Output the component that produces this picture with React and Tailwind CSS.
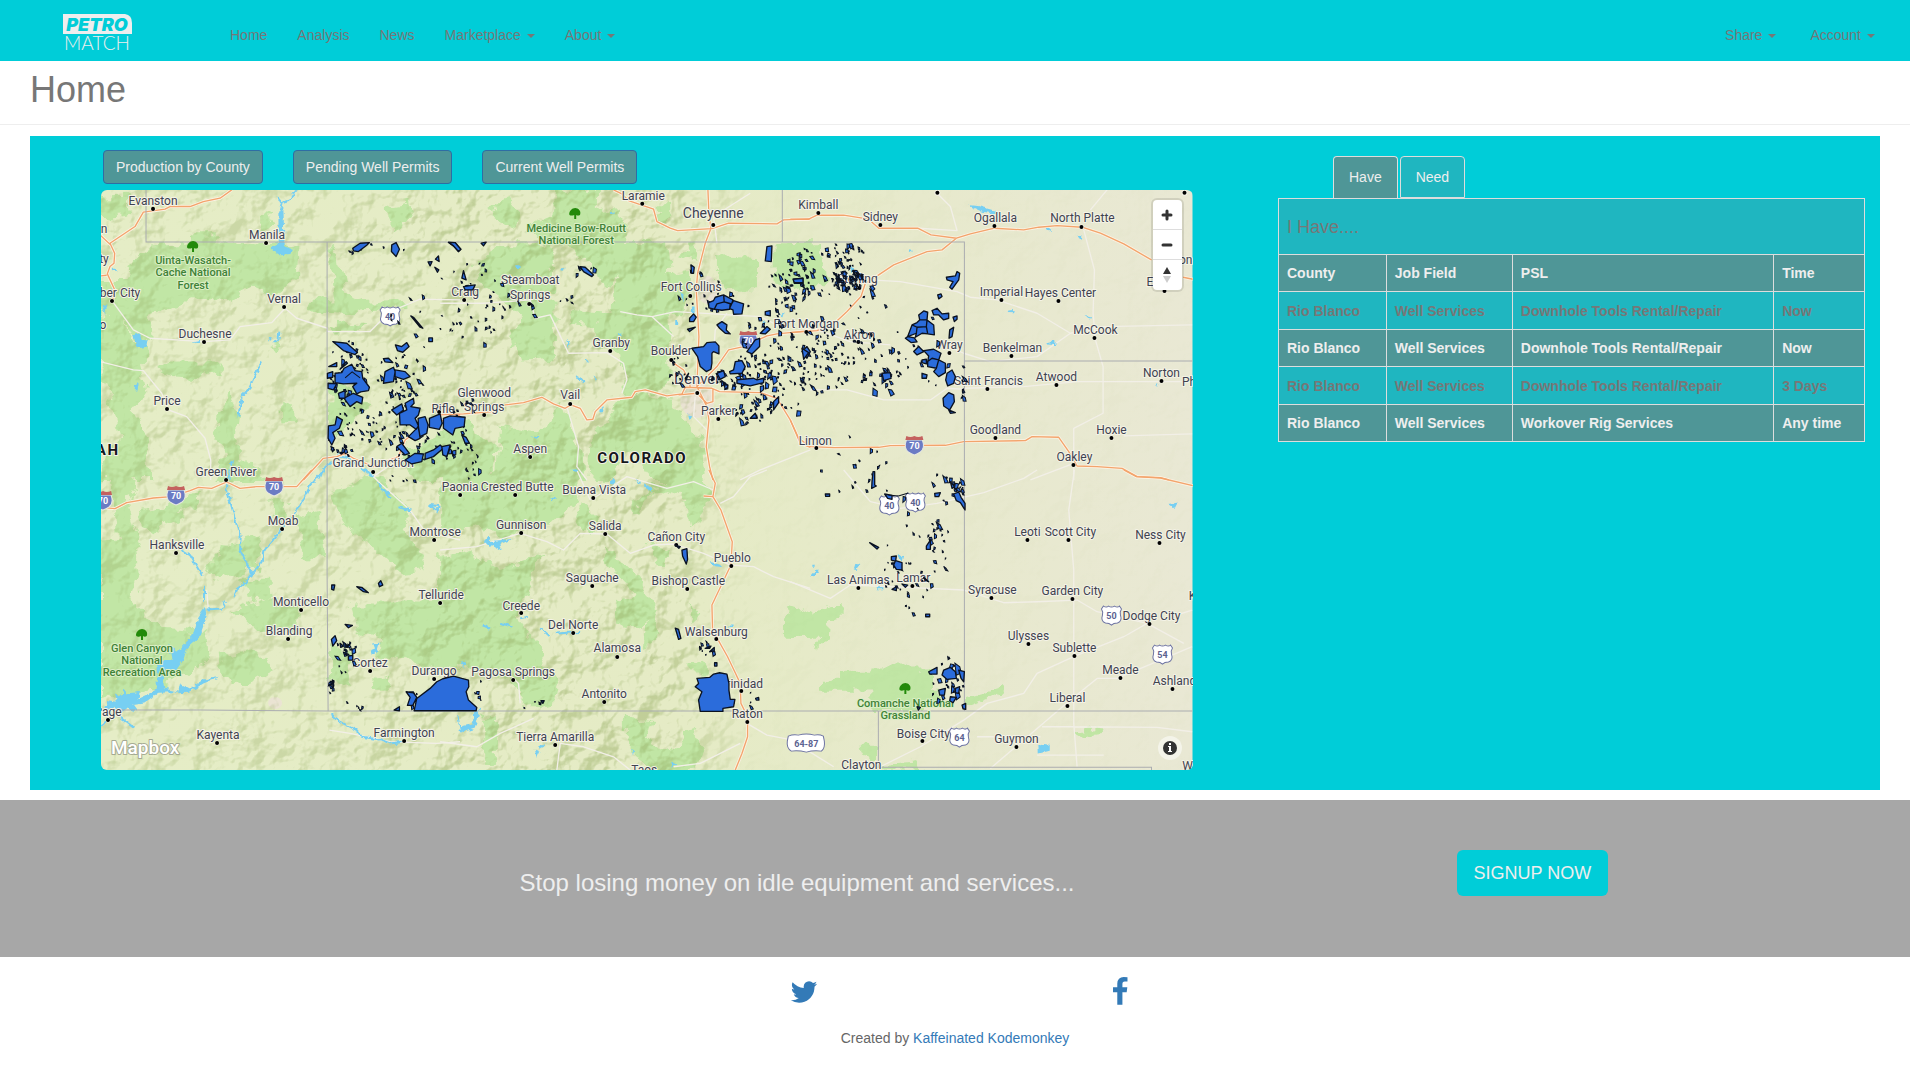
import React from "react";

const cities = [
  ["Evanston", 153, 205, 153, 209], ["ber City", 120, 297, 112, 301], ["Manila", 267, 239, 266, 243],
  ["Vernal", 284, 303, 284, 307], ["Duchesne", 205, 338, 204, 342], ["Price", 167, 405, 167, 409],
  ["Green River", 226, 476, 226, 480], ["Rifle", 443, 413, 439, 412], ["Grand Junction", 373, 467, 373, 472],
  ["Laramie", 643, 200, 642, 204], ["Steamboat", 530, 284], ["Springs", 530, 299, 529, 304],
  ["Craig", 465, 296, 464, 300], ["Fort Collins", 691, 291, 690, 296], ["Granby", 611, 347, 610, 351],
  ["Boulder", 671, 355, 671, 360], ["Glenwood", 484, 397], ["Springs", 484, 411, 484, 415],
  ["Vail", 570, 399, 570, 404], ["Parker", 718, 415, 718, 419], ["Aspen", 530, 453, 530, 457],
  ["Limon", 815, 445, 816, 448], ["Fort Morgan", 806, 328, 806, 332], ["Kimball", 818, 209, 818, 213],
  ["Sidney", 880, 221, 880, 225], ["Ogallala", 995, 222, 994, 226], ["North Platte", 1082, 222, 1081, 227],
  ["Sterling", 857, 283, 859, 288], ["Akron", 859, 339, 858, 342], ["Imperial", 1001, 296, 1001, 300],
  ["Hayes Center", 1060, 297, 1058, 301], ["McCook", 1095, 334, 1094, 338], ["Benkelman", 1012, 352, 1011, 356],
  ["Wray", 949, 349, 949, 353], ["Saint Francis", 988, 385, 987, 389], ["Atwood", 1056, 381, 1056, 385],
  ["Norton", 1161, 377, 1161, 381], ["Goodland", 995, 434, 995, 438], ["Hoxie", 1111, 434, 1111, 438],
  ["Oakley", 1074, 461, 1073, 465], ["Moab", 283, 525, 282, 529], ["Hanksville", 177, 549, 176, 553],
  ["Monticello", 301, 606, 301, 610], ["Blanding", 289, 635, 288, 639], ["Montrose", 435, 536, 434, 540],
  ["Telluride", 441, 599, 440, 603], ["Cortez", 370, 667, 370, 671], ["Durango", 434, 675, 434, 679],
  ["Page", 108, 716, 108, 720], ["Kayenta", 218, 739, 217, 743], ["Farmington", 404, 737, 404, 741],
  ["Paonia", 460, 491, 460, 495], ["Crested Butte", 517, 491, 515, 495], ["Buena Vista", 594, 494, 593, 498],
  ["Gunnison", 521, 529, 521, 533], ["Salida", 605, 530, 605, 534], ["Cañon City", 676, 541, 676, 545],
  ["Pueblo", 732, 562, 731, 566], ["Saguache", 592, 582, 592, 586], ["Bishop Castle", 688, 585, 687, 589],
  ["Creede", 521, 610, 521, 613], ["Del Norte", 573, 629, 573, 633], ["Walsenburg", 716, 636, 716, 639],
  ["Alamosa", 617, 652, 617, 657], ["Pagosa Springs", 513, 676, 513, 680], ["Antonito", 604, 698, 604, 702],
  ["Trinidad", 741, 688, 741, 691], ["Raton", 747, 718, 747, 722], ["Tierra Amarilla", 555, 741, 555, 745],
  ["Taos", 644, 774], ["Leoti", 1027, 536, 1027, 540], ["Scott City", 1070, 536, 1068, 540],
  ["Ness City", 1160, 539, 1159, 543], ["Las Animas", 858, 584, 858, 588], ["Lamar", 913, 582, 912, 586],
  ["Syracuse", 992, 594, 991, 598], ["Garden City", 1072, 595, 1072, 599], ["Dodge City", 1151, 620, 1149, 624],
  ["Ulysses", 1028, 640, 1028, 644], ["Sublette", 1074, 652, 1074, 656], ["Meade", 1120, 674, 1120, 678],
  ["Ashland", 1174, 685, 1172, 689], ["Liberal", 1067, 702, 1067, 706], ["Boise City", 923, 738, 922, 741],
  ["Guymon", 1016, 743, 1016, 747], ["Clayton", 861, 769], ["n", 104, 233], ["ty", 104, 263], ["o", 103, 329],
  ["gton", 1180, 264], ["El", 1151, 286, 1164, 291], ["Phi", 1190, 386], ["K", 1192, 600], ["W", 1187, 770],
];

const forests = [
  { tree: [193, 247], lines: [["Uinta-Wasatch-", 193, 264], ["Cache National", 193, 276], ["Forest", 193, 289]] },
  { tree: [575, 214], lines: [["Medicine Bow-Routt", 576, 232], ["National Forest", 576, 244]] },
  { tree: [142, 635], lines: [["Glen Canyon", 142, 652], ["National", 142, 664], ["Recreation Area", 142, 676]] },
  { tree: [905, 689], lines: [["Comanche National", 905, 707], ["Grassland", 905, 719]] },
];

const usRoutes = [["40", 390, 316], ["40", 889, 505], ["40", 915, 502], ["50", 1111, 615], ["54", 1162, 654], ["64", 959, 737]];
const interstates = [[176, 495], [274, 486], [103, 500], [914, 445], [748, 340]];

/* center x, center y, radius x, radius y, count, dot size */
const clusters = [
  [348, 372, 20, 32, 50, 4], [344, 430, 17, 28, 26, 4], [400, 376, 26, 22, 40, 4], [385, 425, 38, 24, 50, 3],
  [430, 446, 40, 14, 28, 4], [466, 425, 16, 30, 18, 3], [470, 300, 34, 50, 28, 3], [430, 320, 44, 30, 12, 3],
  [505, 310, 28, 26, 16, 3], [585, 268, 14, 10, 6, 4], [380, 248, 40, 5, 6, 3], [568, 298, 10, 6, 4, 3],
  [700, 290, 26, 24, 10, 3], [720, 300, 34, 10, 12, 4], [676, 366, 10, 20, 14, 4], [722, 376, 12, 8, 14, 4],
  [750, 374, 22, 20, 46, 5], [770, 340, 30, 28, 34, 4], [750, 408, 22, 16, 26, 4], [784, 385, 26, 30, 36, 4],
  [820, 362, 34, 32, 52, 4], [790, 290, 22, 30, 44, 4], [812, 270, 34, 28, 42, 4], [847, 278, 16, 14, 60, 4],
  [846, 254, 20, 14, 24, 4], [866, 298, 20, 18, 12, 4], [850, 345, 40, 20, 34, 3], [882, 378, 22, 12, 24, 5],
  [834, 330, 40, 16, 12, 3], [921, 330, 22, 20, 6, 4], [925, 370, 30, 18, 10, 4], [962, 382, 3, 20, 8, 4],
  [900, 345, 24, 16, 8, 3], [848, 465, 40, 30, 12, 3], [870, 478, 26, 20, 6, 4], [930, 505, 30, 40, 20, 4],
  [957, 493, 8, 18, 12, 4], [905, 545, 40, 20, 10, 3], [900, 575, 26, 20, 12, 4], [920, 600, 16, 22, 8, 3],
  [938, 545, 10, 30, 12, 4], [946, 680, 18, 24, 26, 5], [345, 655, 12, 18, 22, 4], [330, 683, 4, 12, 8, 4],
  [352, 704, 12, 8, 5, 3], [412, 698, 8, 8, 6, 4], [478, 690, 4, 12, 5, 3], [534, 704, 16, 6, 4, 3],
  [706, 650, 12, 12, 8, 3], [474, 468, 10, 14, 10, 3], [400, 478, 20, 8, 5, 3], [742, 700, 22, 10, 4, 3],
];

function seeded(seed) {
  let s = seed;
  return () => {
    s = (s * 16807) % 2147483647;
    return s / 2147483647;
  };
}

function scatterPath() {
  const rnd = seeded(4711);
  let d = "";
  clusters.forEach(([cx, cy, rx, ry, n, size]) => {
    for (let i = 0; i < n; i++) {
      const a = rnd() * 6.283;
      const r = Math.sqrt(rnd());
      const x = Math.min(962, Math.max(329, cx + Math.cos(a) * r * rx));
      const y = Math.min(709, Math.max(244, cy + Math.sin(a) * r * ry));
      const k = (0.15 + rnd() * rnd() * 1.2) * size;
      const p = () => ((rnd() - 0.3) * k).toFixed(1);
      d += `M${x.toFixed(1)} ${y.toFixed(1)}l${(k * 0.8).toFixed(1)} ${p()}l${p()} ${k.toFixed(1)}l${(-k * 0.8).toFixed(1)} ${p()}z`;
    }
  });
  return d;
}

const scatter = scatterPath();

const NW = "translate(90 180) scale(0.3333)";
const N = "translate(440 180) scale(0.3333)";
const NE = "translate(790 180) scale(0.3333)";
const SW = "translate(90 470) scale(0.3333)";
const S = "translate(440 470) scale(0.3333)";
const SE = "translate(790 470) scale(0.3333)";

const greens = [
  [NW, "M30 50L110 48L118 110L60 116L30 100ZM130 240L190 200L300 190L300 160L380 160L380 190L560 195L625 210L620 300L560 340L480 320L420 360L300 355L240 385L170 400L180 470L150 500L110 440L60 400L30 400V300L110 300ZM30 400L90 410L120 470L190 520L150 560L170 640L130 700L160 760L190 900H30L60 820L90 760L60 640L30 560ZM200 548H392V580L340 590L240 582L200 560ZM380 730L420 640L450 700L440 820L540 900H370L410 820L370 770ZM890 80L960 68L968 100L940 150L900 148L892 110ZM510 110L540 96L550 130L530 148L512 140ZM715 195L750 230L765 330L820 370L940 360V390L780 400L650 390L662 360L740 355ZM720 440L760 428L820 436L800 455H730ZM576 668L612 680L614 730L580 730ZM540 495L570 484L560 508ZM720 600L790 620L830 680L750 760L715 740ZM960 800L1110 740V900H990L930 850Z"],
  [N, "M345 30H470V90L530 82V110L560 130L530 280L500 330L440 240L370 190L290 180L250 150L340 110ZM160 80L210 60L240 100L220 150L170 120ZM110 250L200 190L340 190L345 540L240 545L215 480L240 400L160 340L100 300ZM530 190L680 188L690 280L740 270L740 400L680 400L695 580L640 640L560 640L540 520L450 500L470 440L370 430L400 390L520 400ZM830 225L950 232V328L865 330L830 290ZM1000 190H1110V310L1060 330L1000 300ZM645 76H690V136L660 130ZM740 190L770 188L765 240L720 230ZM0 760L80 720L170 800L160 900H0ZM180 740L300 760L360 660L390 740L420 830L440 900H170ZM460 760L560 640L700 660L780 780L800 900H640L560 800L520 900H450Z"],
  [NE, "M0 190H100L108 325H60L0 300Z"],
  [SW, "M30 210L130 200L150 310L120 400L220 470L350 480L360 560L300 610L220 650L90 680L30 690ZM60 30L110 0L140 40L110 90L150 240L110 260L80 180ZM150 120L230 110L330 60L320 110L240 150L190 190L160 170ZM350 280L420 220L520 205L500 300L380 330ZM450 320L540 320L545 380L470 390ZM430 420L530 380L630 420L620 480L500 490ZM395 560L500 540L550 600L460 650L400 610ZM620 140L690 120L710 270L640 260ZM540 85L590 100L590 160L550 130ZM720 60L870 20L960 120L950 180L1010 300L930 310L850 230L760 170ZM780 400L1000 400L1110 300V600L980 580L900 560L850 590L880 500L800 480ZM720 520L790 560L780 640L720 640ZM850 620L910 610L905 665L850 665Z"],
  [S, "M0 0H430L410 90L340 170L260 170L180 210L100 160L0 200ZM420 100L480 150L450 190L400 150ZM490 220L520 250L600 330L650 440L640 530L610 540L620 450L570 360L500 270ZM525 390L600 380L620 440L600 480L530 460ZM0 260L70 240L180 300L310 250L280 330L230 450L300 540L350 640L340 700L270 710L200 620L0 560ZM680 20L780 0L810 60L780 150L750 170L740 90L640 60L590 130L575 100ZM560 740L640 750L620 820L700 850L760 770L790 860L760 900H620L560 800ZM120 740H170V885H135V790ZM1025 450L1110 410V500H1025ZM615 220L680 240L670 290ZM750 400L780 430L760 460ZM740 590L800 580L800 610L750 610Z"],
  [SE, "M0 410L60 430L110 408H157V440L120 450L115 500L65 545L90 500H0ZM95 632H152V605H240V592H425V650H450V720H240L240 658H190V668H95ZM528 680L640 648V665L580 690L530 710ZM862 780L900 770L942 775V785L865 795ZM195 830L260 830V870L210 860ZM270 880L380 870L400 895H270Z"],
];

const waters = [
  [NW, "M130 465L150 460L155 480L175 482L172 500L140 505ZM565 100L580 90L584 200L612 210L600 222L570 226L540 205L566 192ZM62 312L72 315L66 330ZM68 262L80 272L70 274ZM36 380L52 374L44 402ZM130 620L146 612L142 635ZM306 484L330 480V488ZM536 474L546 476L540 483Z"],
  [N, "M505 98L525 95L518 104ZM378 480L388 490L384 508ZM405 585L435 602L430 606L410 596ZM460 590L474 598L466 602ZM434 535L446 545L436 548ZM270 770L294 772V778ZM376 804L402 806ZM390 870L410 868V876ZM226 256H238V264H226ZM364 262H372V272H364ZM720 335L730 340L728 368ZM755 380H763V400H755ZM705 420H714V434H705ZM960 418L975 424L968 436ZM1016 404L1030 402L1024 412ZM476 690L488 682L485 698ZM744 704L756 706L748 720ZM536 456L544 460L538 474Z"],
  [NE, "M533 76L560 78L625 96V104L575 96ZM765 144L780 142L782 152L770 155ZM864 168L876 168L874 180ZM354 208L368 210L360 216ZM650 392L670 390L668 397L654 396ZM882 408L902 412L898 419ZM768 490L795 484V495L770 494ZM1094 618L1104 612L1100 624ZM178 258L192 262L184 278Z"],
  [SW, "M235 520L262 545L290 515L310 490L325 440L345 410L350 440L330 500L290 535L280 570L255 605L218 610L222 655L265 665L270 640L300 655L340 628L390 620L340 640L300 665L205 668L160 700L130 705L145 725L110 715L90 730L70 710L45 725L50 690L80 695L75 670L95 680L100 655L112 670L150 665L145 685L200 660L200 590L190 570L245 570Z M846 520L868 518L860 545L845 558L840 540L852 535Z"],
  [S, "M130 215L145 198L150 213L185 210L220 206L180 222L185 242L155 224L150 235ZM55 735L60 770L100 760L98 730L120 715L110 755L104 775L60 790L52 740ZM300 822L320 824L296 836ZM284 838L298 845L290 864ZM612 40L640 60L632 66L612 50ZM586 30L600 38L596 42ZM808 275L840 284L845 294L825 292ZM65 575L76 572L72 594ZM868 466H880V474H868ZM510 32L524 28L526 40H514ZM575 838L582 840L578 856ZM694 875L712 880L694 892ZM330 85L345 82L338 94Z"],
  [SE, "M60 320L80 298L86 304L70 322ZM190 298L196 278L210 282L196 300ZM258 352H282V358H262ZM66 284H76V290H66ZM1132 102L1160 98L1162 108L1150 114ZM744 828L760 822L778 824V842L745 850ZM322 256L338 258L334 275Z"],
];

const rivers = [
  [NW, "M618 32L600 62L575 70L560 50M578 70L570 100M516 545L505 565L488 600L478 625L455 650L445 710M425 840L418 900M568 455L565 480L550 485M740 825L770 830L850 890M725 845L700 870L690 895"],
  [SW, "M412 0L408 50L425 110L440 165L452 200L450 240L470 280L485 310L460 345L440 360L430 385M700 0L660 45L635 100L605 140L570 180L545 215L520 245L515 275L485 315M405 395L395 415L350 418M275 240L300 255L335 315M342 350V395M30 770L60 745M85 738L130 772M725 732L740 750L800 780L815 800L870 808L900 820L945 815M865 40L905 85M925 112L965 122M1040 120L1020 105L1045 108L1042 130"],
  [S, "M125 465L150 475M300 475L325 498M350 490L420 486M240 445L260 440M180 458L215 470"],
];

const roads = [
  [NW, "M425 30L390 55L340 65L300 80L240 80L225 88L160 97L135 140L60 190L74 220L72 250L60 260L52 282L75 332L68 360M30 165L62 195M30 288L50 286M640 900L700 835L740 830L765 820L790 835L850 860L900 840L925 830L945 780L1000 740L1110 705"],
  [N, "M520 30L545 42L565 62L640 88L650 125L690 145L712 152L815 146L865 130L1010 132L1030 120L1110 117M803 30L806 100L812 146L795 190L772 280L768 330L776 470L770 620L800 680L806 720L798 800L808 860L818 900M0 705L70 702L160 695L195 675L250 668L305 652L340 672L375 685L392 675L420 685L440 720L458 718L465 695L500 660L575 652L585 635L615 630L680 648L725 642L735 622L815 625L838 635L960 638L1010 655L1050 720L1080 790L1110 802M770 620L830 560L865 510L910 500L980 468L1010 462L1110 452M694 545L730 570L745 600L750 620M715 645L770 640L800 670L818 665L818 625"],
  [NE, "M0 118H55L80 106L160 106L235 118L265 145L382 145L422 165L498 175L540 162L612 145L700 150L745 142L800 137L875 142L930 160L1000 192L1083 240M1178 292L1207 298M498 175L455 210L410 215L310 255L265 285L225 310L212 350L170 395L130 432L80 452L0 458M0 720L25 775L60 800L130 803L265 802L300 797L465 796L520 785L705 782L725 770L805 772L835 815L860 858L920 860L995 865L1040 890L1110 893L1135 900"],
  [SW, "M30 112L75 116L110 98L190 84L245 80L300 62L325 52L365 55L410 36L450 55L500 50L620 50L665 0"],
  [S, "M806 0L825 40L818 80L842 120L876 215L872 285L815 405L817 480L862 560L900 640L902 700L922 740V800L905 850L885 900M790 78L818 80"],
  [SE, "M1000 0L1038 20L1110 24L1207 47"],
];

const minorRoads = [
  [NW, "M68 365L130 450L180 475L340 485L420 480L450 440L545 428L585 385L620 415L712 445L712 455L840 455L900 395L990 358L1110 360M30 545L130 570L160 572L215 640L235 690L290 710L345 775L362 840V900M850 890L930 835"],
  [N, "M0 370H130L270 360L285 415L330 405L385 520L500 518L550 550L560 600L545 640M540 395L590 405L635 410L705 395L960 410L1020 440M635 410L700 470M380 680L415 800L410 860L440 900M830 190L820 110L930 40M820 520L825 450L860 400M765 650L760 710L800 750M900 900L960 870L1110 810"],
  [NE, "M240 300L330 305L500 335L540 352L620 360L740 400L840 460L940 440L1205 435M880 150L912 270L908 400L915 480L938 560V700L850 745V900M385 145L500 152L480 80L440 40M900 90L950 30M80 450L180 485L300 495M430 480L520 520L600 545L740 530L840 460M520 625L700 620L860 605H1205M60 630L170 630L280 660H420L470 625L520 628M720 900L850 850M1000 768L1205 762"],
  [SW, "M830 0L870 40L960 120L1005 185L1110 210M718 780L780 790L900 815L1040 820L1110 815M350 360L355 420"],
  [S, "M240 700L235 640L215 620M0 815L110 830L180 790L280 745M0 240L110 230L190 205L240 190L320 215L370 240L420 190L500 192L570 250L640 225L700 222L790 250L870 285L940 290L1000 320L1110 355M410 0L450 90M450 90L500 60L560 20L680 55L760 35L820 60M840 100L880 80L930 20L980 0M350 900L360 820L430 830L520 860L570 900M920 760L980 795L1110 820M700 890L780 880L900 820"],
  [SE, "M160 0L240 95L330 115L440 100L580 68L700 25L740 0M852 0L835 120L850 300V760L860 890M0 335L120 385L180 345L300 350L520 360L640 398L740 395L860 390L920 425L1070 460L1180 520M1070 460L1000 500L850 560L740 610L700 670L590 700L520 750L390 830L270 890M1205 530L980 625H920L840 690L600 895M50 840L130 890M755 770H850L1100 772L1205 785M560 800H750M740 855H940M1110 450L1205 420"],
];

const wells = [
  [NW, "M788 205L810 190L838 188L830 196L805 215L790 213ZM905 195L918 188L928 208L918 230L904 215ZM1075 188L1095 190L1112 208L1105 215L1090 198ZM1036 238L1045 228L1047 245ZM1034 262L1046 270L1042 277ZM1014 246L1026 245L1020 258ZM728 485L770 490L802 518L795 524L760 512ZM916 495L935 500L950 488L957 500L938 517L922 512ZM880 536L895 535L908 548L885 546ZM962 408L970 412L998 445L990 442ZM1016 474H1027V485H1016ZM735 580L755 578L762 565L785 553L795 572L815 575L818 595L838 622L835 632L812 636L800 642L788 620L800 610L760 612L735 608ZM712 580L728 575V592L712 595ZM714 610L740 612L730 630L714 625ZM745 640L765 632V655H748ZM762 655L790 640L818 652L815 672L800 665L780 680ZM716 560L740 548V560ZM750 568L768 545L772 550ZM885 575L910 562L915 575L910 605L880 610ZM915 570L945 575L960 590L940 598L915 590ZM928 700L950 690L945 670L970 655L972 670L962 680L990 685L985 705L975 715L985 738L978 748L960 735H930ZM905 690L935 672L940 690L920 705ZM955 770L985 740L990 775L975 782ZM984 715L1005 710L1014 735L1010 760L990 770L985 745ZM1018 715L1050 702L1056 730L1048 748L1018 742ZM1060 715L1080 708L1125 712L1122 740L1095 745L1088 765L1060 745ZM715 738L735 735L740 710L757 720L748 745L728 758L735 775L725 795L714 775ZM920 800L935 790L958 820L945 825ZM945 840L975 820L1000 822L995 845L965 852ZM1005 820L1030 810L1050 795L1060 805L1030 830L1005 838ZM1062 800L1082 798L1070 828L1062 820Z"],
  [N, "M123 190L138 187L130 198ZM25 187L45 188L62 208L55 215L40 198ZM65 295L70 272L78 300ZM70 320L105 315L98 330L75 330ZM420 260L435 262L460 285L455 290L430 275ZM980 200L995 198L993 245L975 243ZM752 255L762 262L760 280H754ZM805 368L820 362L825 352L850 345L852 366L830 372L822 388L806 384ZM850 345L878 360L874 372L852 366ZM822 388L830 372L852 366L870 372L868 388L845 391ZM874 372L880 362L910 372L905 402L880 403L878 390L868 386ZM748 415L760 402L768 412L760 425H748ZM830 435L845 425L860 435L858 450L870 462L855 460L838 445ZM742 448L765 442L748 455ZM755 505L790 500L800 488L825 486L836 498V522L820 515L815 520V550L812 568L798 575L780 560L772 530ZM735 595L745 580L738 600ZM868 575L880 570L885 545L905 542L915 560L905 580L870 582ZM920 515L945 480L958 475V500L935 522ZM975 395L990 392V408L975 405ZM960 460L980 440L990 448L975 462ZM1060 298L1088 295V310H1062ZM890 600L940 595L950 600L970 595V608L930 618L890 610ZM930 715L945 700L950 715ZM1000 665L1015 650L1015 668L1000 690ZM830 580L850 572L855 590L840 598ZM65 765L78 772L88 790L75 790ZM5 800L30 795L20 830L8 825ZM1085 515L1100 500L1110 515L1100 535Z"],
  [NE, "M468 292L495 288L500 275L508 280L505 300L485 328L478 322L488 305L470 300ZM442 345L452 342L455 350L445 357ZM425 392L440 385L455 402L475 400V415L460 420L445 405L430 405ZM385 405L400 393L412 397L410 420H388ZM388 420H410L408 440L380 442L365 435L380 428ZM410 420L430 435L432 465L412 462L408 440ZM365 435L380 442L378 460L352 470ZM380 442L408 440L412 462L395 460L375 472L378 460ZM345 475L352 470L372 474L380 486L362 488ZM488 412L500 408V418L492 425ZM478 450L490 442L485 470L476 475ZM370 515L385 500L400 515L380 525ZM400 512L430 508L452 520L445 540L425 535L412 545L415 528ZM412 545L425 535L445 540L438 565L412 560ZM445 540L465 550V578L445 590L430 575L438 565ZM395 540L408 538V552L395 548ZM470 580L485 570L495 590L490 610L472 618L466 600ZM458 655L475 638L490 645L492 665L478 690L460 678ZM395 580L410 585L408 595H395ZM35 505L55 518L40 538ZM8 298L38 295V308H12ZM275 580L300 578L302 595L280 602ZM475 690L495 698L480 700Z"],
  [SW, "M725 345H734L731 360L725 358ZM800 350L815 352L835 368L820 365ZM865 340L872 332L878 345L868 350ZM765 463L787 466L775 473ZM724 508L735 497L740 512L728 528ZM775 558L788 556V570L775 570ZM948 665L970 668L980 682L968 706H952L960 682ZM972 722L980 685L1020 655L1040 635L1058 626L1090 618L1115 625L1135 630L1136 650L1128 665L1135 690L1160 712L1158 722ZM912 720L928 710V722ZM750 520L760 528L752 532Z"],
  [S, "M770 625L808 622L820 612L838 608L860 612L866 640V660L870 688H884L880 710L848 715V724H780L775 690L785 665L765 650L775 640ZM725 240L740 236L742 268L738 282L727 258ZM705 474L715 478L722 505L715 508ZM795 535L812 528L808 535ZM808 545L822 532V542ZM946 685L955 682L956 690H948ZM302 692L312 692L308 700ZM705 225L720 230L716 235ZM823 578H830V588H823Z"],
  [SE, "M248 5H253V45L258 48L244 55L245 35ZM283 72L305 76L305 88L292 85ZM105 72H118V79H106ZM433 70L450 68L445 80H434ZM490 72L505 66L512 82L524 100V120L510 98L498 92ZM480 35L492 50L485 55ZM408 228L420 210V238H408ZM303 260L318 258L316 272L335 278L335 300L318 298L310 285L315 273L303 270ZM238 218L265 232L260 237ZM400 322L415 335L405 330ZM406 432H418V440H406ZM460 600L480 592L495 605L498 625L470 628L455 615ZM415 605L440 592L440 612H418ZM480 680L498 682L488 698L478 692ZM505 600L522 605L520 635L512 625ZM495 655L508 650L505 670L495 668ZM445 660L465 655L462 675H448ZM515 705L526 700V718L518 716ZM335 342L352 345L345 352ZM305 358L318 350V362ZM380 710L390 712L384 720Z"],
];

function Layer({ shapes, ...rest }) {
  return (
    <g {...rest}>
      {shapes.map(([t, d], i) => (
        <path key={i} transform={t} d={d} />
      ))}
    </g>
  );
}

function ColoradoMap() {
  const halo = { paintOrder: "stroke", strokeLinejoin: "round" };
  return (
    <svg
      className="block h-full w-full font-[Roboto,sans-serif]"
      viewBox="101 190 1091 580"
      preserveAspectRatio="xMidYMid slice"
      role="img"
      aria-label="Map of Colorado wells"
    >
      <defs>
        <linearGradient id="land" x1="0" x2="1">
          <stop offset="0" stopColor="#e5edc6" />
          <stop offset="0.55" stopColor="#e5ebc5" />
          <stop offset="0.75" stopColor="#e7e9cc" />
          <stop offset="1" stopColor="#e9e8d4" />
        </linearGradient>
        <linearGradient id="fade" x1="0" x2="1">
          <stop offset="0" stopColor="#fff" stopOpacity="0.7" />
          <stop offset="0.22" stopColor="#fff" stopOpacity="0.7" />
          <stop offset="0.32" stopColor="#fff" />
          <stop offset="0.52" stopColor="#fff" />
          <stop offset="0.6" stopColor="#fff" stopOpacity="0.06" />
          <stop offset="1" stopColor="#fff" stopOpacity="0.04" />
        </linearGradient>
        <mask id="west">
          <rect x="101" y="190" width="1091" height="580" fill="url(#fade)" />
        </mask>
        <filter id="relief" x="0" y="0" width="1" height="1" colorInterpolationFilters="sRGB">
          <feTurbulence type="fractalNoise" baseFrequency="0.028" numOctaves="4" seed="8" />
          <feColorMatrix values="0 0 0 0 0 0 0 0 0 0 0 0 0 0 0 1 0 0 0 0" />
          <feDiffuseLighting surfaceScale="16" lightingColor="#ffffff" result="light">
            <feDistantLight azimuth="225" elevation="50" />
          </feDiffuseLighting>
          <feColorMatrix in="light" values="0 0 0 0 0.56 0 0 0 0 0.66 0 0 0 0 0.36 -1.6 0 0 0 1.15" />
        </filter>
        <filter id="rough" x="0" y="0" width="1" height="1">
          <feTurbulence type="fractalNoise" baseFrequency="0.07" numOctaves="3" seed="3" />
          <feDisplacementMap in="SourceGraphic" scale="18" xChannelSelector="R" yChannelSelector="G" />
        </filter>
        <filter id="jagged" x="0" y="0" width="1" height="1">
          <feTurbulence type="fractalNoise" baseFrequency="0.2" numOctaves="2" seed="5" />
          <feDisplacementMap in="SourceGraphic" scale="5" xChannelSelector="R" yChannelSelector="G" />
        </filter>
        <g id="tree" fill="#238a0a">
          <path d="M-6 0C-6 -3 -3 -6 0 -6C3 -6 6 -3 5 0C5 2 2 2 1 1L1 5H-1L-1 1C-3 2 -6 2 -6 0Z" />
        </g>
        <g id="us">
          <path d="M-8 -9Q-5 -7 -3 -9Q0 -7 3 -9Q6 -7 8 -9L10 -6Q8 -3 9 0Q11 6 6 8Q2 8 0 10Q-2 8 -6 8Q-11 6 -9 0Q-8 -3 -10 -6Z" fill="#fff" stroke="#6d73a3" />
        </g>
        <g id="interstate">
          <path d="M-8 -5H8Q11 3 6 7Q3 9 0 10Q-3 9 -6 7Q-11 3 -8 -5Z" fill="#6b7bc4" stroke="#e7e9e0" />
          <path d="M-8 -9Q-4 -7 0 -9Q4 -7 8 -9L9 -5H-9Z" fill="#c4615f" />
          <text y="4" textAnchor="middle" fontSize="9" fontWeight="700" fill="#fff">70</text>
        </g>
      </defs>

      <rect x="101" y="190" width="1091" height="580" fill="url(#land)" />
      <g filter="url(#rough)">
        <rect x="101" y="190" width="1091" height="580" fill="none" />
        <Layer shapes={greens} fill="#c1e6a5" />
      </g>
      <g fill="#ecdfd8" opacity="0.7">
        <ellipse cx="697" cy="400" rx="17" ry="18" />
        <ellipse cx="275" cy="703" rx="7" ry="6" />
        <ellipse cx="707" cy="290" rx="10" ry="14" />
      </g>
      <g mask="url(#west)">
        <rect x="101" y="190" width="1091" height="580" filter="url(#relief)" opacity="0.42" />
      </g>

      <Layer shapes={minorRoads} fill="none" stroke="#f2efe7" strokeWidth="4" strokeLinejoin="round" />
      <g filter="url(#jagged)">
        <rect x="101" y="190" width="1091" height="580" fill="none" />
        <Layer shapes={waters} fill="#77cff2" />
        <Layer shapes={rivers} fill="none" stroke="#77cff2" strokeWidth="6" strokeLinejoin="round" />
      </g>
      <Layer shapes={roads} fill="none" stroke="#fbf3e4" strokeWidth="9" strokeLinejoin="round" />
      <Layer shapes={roads} fill="none" stroke="#f3a46c" strokeWidth="4" strokeLinejoin="round" />

      <path
        d="M146 190V242H964V711M327 242V575L328 711M782 190V242M964 361H1192M101 710H200L328 711H1192M878 711V767H1151V770"
        fill="none"
        stroke="#aaacb0"
      />

      <g fill="#3f4250" stroke="#f4f3e6" strokeWidth="2" fontSize="12" textAnchor="middle" style={halo}>
        {cities.map(([name, x, y, dx, dy]) => (
          <g key={name + x}>
            <text x={x} y={y}>{name}</text>
            {dx && <circle cx={dx} cy={dy} r="2" fill="#000" strokeWidth="1" />}
          </g>
        ))}
        <text x="713" y="218" fontSize="14">Cheyenne</text>
        <text x="697" y="384" fontSize="15">Denver</text>
        <g fill="#000">
          <circle cx="713" cy="225" r="2" />
          <circle cx="697" cy="393" r="2" />
          <circle cx="937" cy="193" r="2" />
          <circle cx="1184" cy="193" r="2" />
        </g>
        <g fill="#15171c" fontSize="15" fontWeight="700" className="tracking-widest">
          <text x="642" y="463">COLORADO</text>
          <text x="97" y="455">UTAH</text>
        </g>
      </g>

      <g fontSize="11" fontWeight="500" fill="#3f8238" stroke="#dcefc6" strokeWidth="2" textAnchor="middle" style={halo}>
        {forests.map(({ tree, lines }) => (
          <g key={tree[0]}>
            <use href="#tree" x={tree[0]} y={tree[1]} stroke="none" />
            {lines.map(([t, x, y]) => (
              <text key={t} x={x} y={y}>{t}</text>
            ))}
          </g>
        ))}
      </g>

      {usRoutes.map(([n, x, y]) => (
        <g key={x}>
          <use href="#us" x={x} y={y} />
          <text x={x} y={y + 4} textAnchor="middle" fontSize="9" fontWeight="700" fill="#5c6290">{n}</text>
        </g>
      ))}
      <path d="M788 736Q793 734 798 735Q806 733 814 735Q819 734 823 736L824 741Q825 748 821 751Q813 750 806 752Q798 750 791 751Q786 748 787 741Z" fill="#fff" stroke="#6d73a3" />
      <text x="806" y="747" textAnchor="middle" fontSize="9" fontWeight="700" fill="#5c6290">64-87</text>
      {interstates.map(([x, y]) => (
        <use key={x} href="#interstate" x={x} y={y} />
      ))}

      <path d={scatter} fill="#2b6cdb" stroke="#0b1220" strokeWidth="1" />
      <Layer shapes={wells} fill="#2b6cdb" stroke="#0b1220" strokeWidth="4" strokeLinejoin="round" />
      <g fill="none" stroke="#0b1220">
        <path d="M888 495L898 496L908 493M345 378L352 372L360 378" />
      </g>

      <text x="111" y="754" fontSize="19" fontWeight="500" fill="#fff" stroke="#a5aa93" strokeWidth="2" style={halo}>Mapbox</text>
    </svg>
  );
}

function Caret() {
  return <span className="ml-1.5 inline-block border-x-4 border-t-4 border-x-transparent border-t-[#777] align-middle" />;
}

function NavItem({ children, menu }) {
  return menu ? (
    <button type="button" className="px-[15px] py-5">{children}<Caret /></button>
  ) : (
    <a href="#" className="px-[15px] py-5">{children}</a>
  );
}

const rows = [
  ["Rio Blanco", "Well Services", "Downhole Tools Rental/Repair", "Now"],
  ["Rio Blanco", "Well Services", "Downhole Tools Rental/Repair", "Now"],
  ["Rio Blanco", "Well Services", "Downhole Tools Rental/Repair", "3 Days"],
  ["Rio Blanco", "Well Services", "Workover Rig Services", "Any time"],
];

export default function App() {
  return (
    <div className="bg-white pr-[15px] font-['Liberation_Sans',Arial,sans-serif] text-sm leading-5 text-[#777]">
      <header className="flex h-[61px] items-center bg-[#00cdd8] pl-[63px]">
        <a href="#" aria-label="Petro Match" className="mr-[82px] mt-[3px]">
          <svg width="70" height="37" viewBox="0 0 70 37" className="overflow-visible">
            <path d="M0 0H62Q69 1 69 9V20H0Z" fill="#eee" />
            <text x="34" y="17" textAnchor="middle" fontSize="18" fontWeight="900" fontStyle="italic" fill="#00cdd8" className="font-[Inter,sans-serif]">PETRO</text>
            <text x="34" y="36" textAnchor="middle" fontSize="19" fontWeight="300" fill="#eee" className="font-[Lato,sans-serif]">MATCH</text>
          </svg>
        </a>
        <nav className="mt-2 flex flex-1">
          <NavItem>Home</NavItem>
          <NavItem>Analysis</NavItem>
          <NavItem>News</NavItem>
          <NavItem menu>Marketplace</NavItem>
          <NavItem menu>About</NavItem>
          <div className="ml-auto mr-5 flex gap-1">
            <NavItem menu>Share</NavItem>
            <NavItem menu>Account</NavItem>
          </div>
        </nav>
      </header>

      <div className="h-16 border-b border-[#eee] px-[30px] pt-[9px]">
        <h1 className="text-4xl leading-10 font-medium">Home</h1>
      </div>

      <main className="mx-[30px] mt-[11px] flex bg-[#00cdd8] pb-5">
        <section className="ml-[71px] w-[59%] pt-3.5">
          <div className="mb-1.5 flex gap-[30px] pl-0.5 text-[#eee]">
            {["Production by County", "Pending Well Permits", "Current Well Permits"].map((label) => (
              <button key={label} type="button" className="rounded border border-[#2e6da4] bg-[#4f9697] px-3 py-1.5">
                {label}
              </button>
            ))}
          </div>
          <div className="relative h-[580px] overflow-hidden rounded-md">
            <ColoradoMap />
            <div className="absolute top-2.5 right-[11px] w-[29px] divide-y divide-[#ddd] rounded bg-white shadow-[0_0_0_2px_rgba(0,0,0,0.1)]">
              <button type="button" aria-label="Zoom in" className="flex h-[30px] w-full items-center justify-center">
                <svg width="12" height="12" viewBox="0 0 12 12" stroke="#333" strokeWidth="3" strokeLinecap="round"><path d="M6 2V10M2 6H10" /></svg>
              </button>
              <button type="button" aria-label="Zoom out" className="flex h-[30px] w-full items-center justify-center">
                <svg width="12" height="12" viewBox="0 0 12 12" stroke="#333" strokeWidth="3" strokeLinecap="round"><path d="M2 6H10" /></svg>
              </button>
              <button type="button" aria-label="Reset bearing" className="flex h-[30px] w-full items-center justify-center">
                <svg width="10" height="18" viewBox="0 0 10 18"><path d="M5 1L9 8H1Z" fill="#333" /><path d="M5 17L9 10H1Z" fill="#ccc" /></svg>
              </button>
            </div>
            <button type="button" aria-label="Map attribution" className="absolute right-[11px] bottom-2.5 flex h-6 w-6 items-center justify-center rounded-full bg-white/50">
              <svg width="16" height="16" viewBox="0 0 16 16"><circle cx="8" cy="8" r="7" fill="#333" /><path d="M7 3H9V5H7ZM6 6H9V11H10V12H6V11H7V7H6Z" fill="#fff" /></svg>
            </button>
          </div>
        </section>

        <section className="mr-[15px] ml-auto w-[587px] pt-5">
          <div role="tablist" className="flex gap-0.5 pl-[55px] text-[#eee]">
            <button type="button" role="tab" aria-selected="true" className="rounded-t border border-b-0 border-[#ddd] bg-[#4f9697] px-[15px] pt-2.5 pb-[11px]">Have</button>
            <button type="button" role="tab" aria-selected="false" className="rounded-t border border-[#ddd] bg-[#1fb6c0] px-[15px] py-2.5">Need</button>
          </div>
          <table className="w-full table-fixed border-collapse bg-[#1fb6c0] text-left font-bold [&_td]:border [&_td]:border-[#ddd] [&_td]:px-2 [&_th]:border [&_th]:border-[#ddd] [&_th]:px-2">
            <colgroup>
              <col className="w-[18.4%]" />
              <col className="w-[21.5%]" />
              <col className="w-[44.6%]" />
              <col className="w-[15.5%]" />
            </colgroup>
            <thead>
              <tr className="h-14"><th colSpan={4} className="text-lg font-normal">I Have....</th></tr>
              <tr className="h-[37px] bg-[#4f9697] text-[#eee]">
                <th>County</th><th>Job Field</th><th>PSL</th><th>Time</th>
              </tr>
            </thead>
            <tbody>
              {rows.map((row, i) => (
                <tr key={i} className="h-[37px] odd:h-[38px] even:bg-[#4f9697] even:text-[#eee]">
                  {row.map((cell, j) => <td key={j}>{cell}</td>)}
                </tr>
              ))}
            </tbody>
          </table>
        </section>
      </main>

      <section className="mt-2.5 flex h-[157px] items-start justify-between bg-[#a7a7a7] pt-[50px] pr-[15.8%] pl-[27.2%] text-[#eee]">
        <p className="mt-[17px] text-2xl leading-8">Stop losing money on idle equipment and services...</p>
        <button type="button" className="rounded-md bg-[#00cdd8] px-[17px] py-2.5 text-lg leading-[26px]">SIGNUP NOW</button>
      </section>

      <footer className="pt-5 pb-[30px] text-[#337ab7]">
        <div className="flex pl-[41.3%]">
          <a href="#" aria-label="Twitter" className="mr-[25.5%]">
            <svg width="30" height="30" viewBox="0 0 1792 1792" fill="currentColor"><path d="M1684 408q-67 98-162 167 1 14 1 42 0 130-38 259.5t-115.5 248.5-184.5 210.5-258 146-323 54.5q-271 0-496-145 35 4 78 4 225 0 401-138-105-2-188-64.5t-114-159.5q33 5 61 5 43 0 85-11-112-23-185.5-111.5t-73.5-205.5v-4q68 38 146 41-66-44-105-115t-39-154q0-88 44-163 121 149 294.5 238.5t371.5 99.5q-8-38-8-74 0-134 94.5-228.5t228.5-94.5q140 0 236 102 109-21 205-78-37 115-142 178 93-10 186-50z" /></svg>
          </a>
          <a href="#" aria-label="Facebook">
            <svg width="30" height="30" viewBox="0 0 1792 1792" fill="currentColor"><path d="M1343 12v264h-157q-86 0-116 36t-30 108v189h293l-39 296h-254v759h-306v-759h-255v-296h255v-218q0-186 104-288.5t277-102.5q147 0 228 12z" /></svg>
          </a>
        </div>
        <p className="mt-[21px] text-center text-[#666]">
          Created by <a href="#" className="text-[#337ab7]">Kaffeinated Kodemonkey</a>
        </p>
      </footer>
    </div>
  );
}
